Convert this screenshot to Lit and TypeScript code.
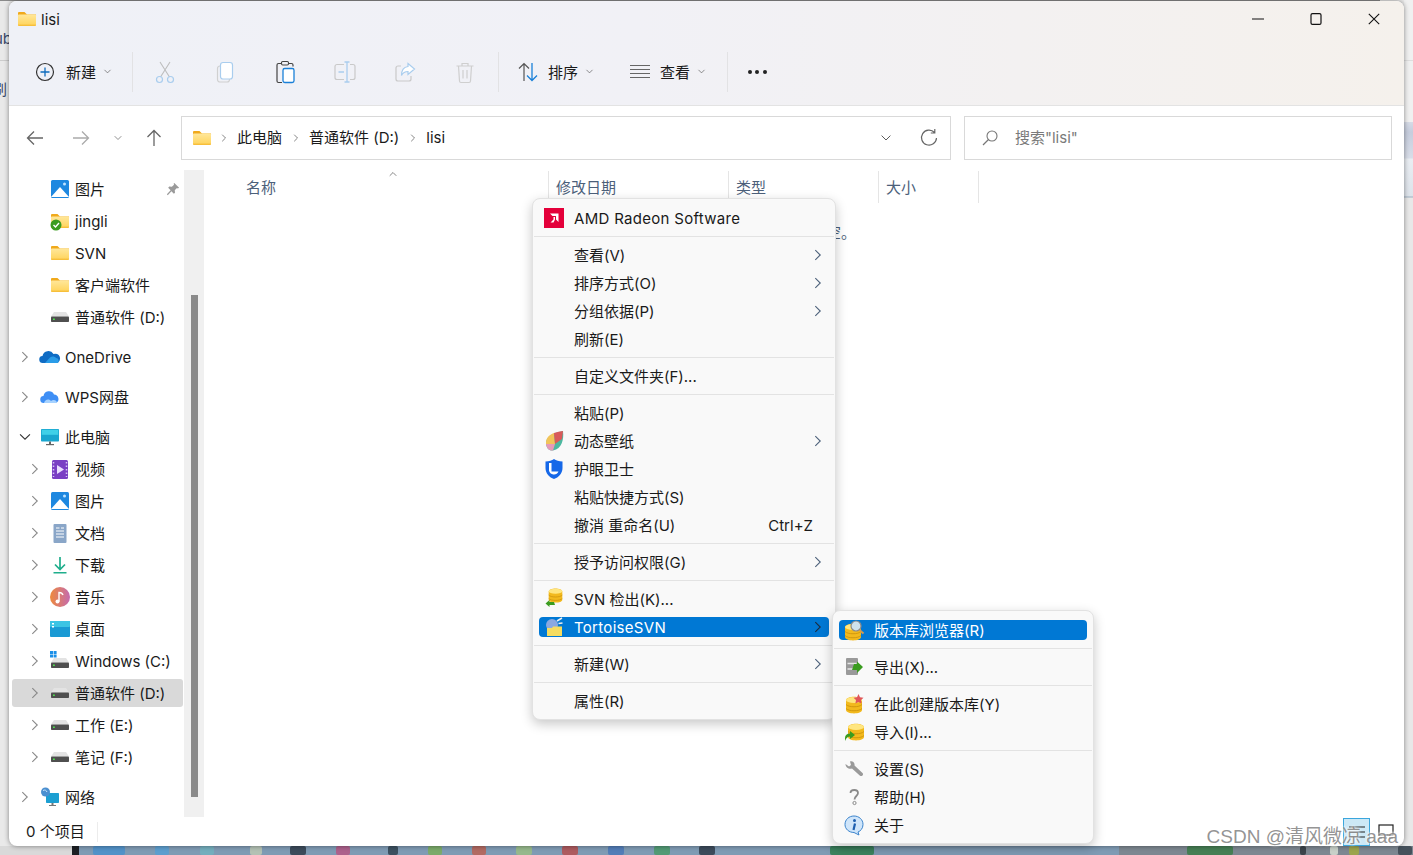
import { LitElement, html, css, svg, nothing } from "lit";
import { customElement } from "lit/decorators.js";
import { classMap } from "lit/directives/class-map.js";

const chevronRight = svg`<path d="M7 4.500 12.500 10 7 15.500" fill="none" stroke="currentColor" stroke-width="1.200"/>`;
const chevronDown = svg`<path d="M4.500 7 10 12.500 15.500 7" fill="none" stroke="currentColor" stroke-width="1.200"/>`;
const chevronUp = svg`<path d="M4.500 13 10 7.500l5.500 5.500" fill="none" stroke="currentColor" stroke-width="1.300"/>`;

const db = svg`<path d="M2 5.500c0-5 16-5 16 0V15c0 4.500-16 4.500-16 0z" fill="#f2b91d"/><ellipse cx="10" cy="5" rx="8" ry="3" fill="#ffe680"/><path d="M2 9.500c2.500 3 13.500 3 16 0M2 13.500c2.500 3 13.500 3 16 0" fill="none" stroke="#c98f0a" stroke-width=".8"/>`;
const drive = svg`<path d="M4 5h12l3 4.500H1z" fill="#e3e3e3"/><rect x="1" y="9.500" width="18" height="5.500" rx=".8" fill="#4f4f4f"/><rect x="3" y="11.500" width="1.800" height="1.500" fill="#4ee44e"/>`;
const folder = svg`<path d="M1 4a1 1 0 0 1 1-1h5.500L10 5.500h9V8H1z" fill="#f0a91b"/><rect x="1" y="5.500" width="18" height="11.500" rx=".8" fill="url(#fold)"/>`;

const icons: Record<string, unknown> = {
	folder,
	drive,
	picture: svg`<rect x="1" y="1" width="18" height="18" rx="1.500" fill="#1e88e0"/><path d="M1 18 10 8l9 10z" fill="#fff"/><circle cx="14.500" cy="5" r="1.500" fill="#bfe3ff"/>`,
	jingli: svg`${folder}<circle cx="6" cy="14" r="5.500" fill="#3a9c1f"/><path d="m3.500 14 2 2 3.500-4" fill="none" stroke="#fff" stroke-width="1.400"/>`,
	onedrive: svg`<path d="M3 16a3.500 3.500 0 0 1-.5-7A6 6 0 0 1 13.500 7 4.500 4.500 0 0 1 17 16z" fill="#0f6cc4"/><path d="M5 16l5-5.500c2-1.500 4.500-1.500 6 .5 2.500 0 3.500 3 2 5z" fill="#2a9ce8"/>`,
	wps: svg`<path d="M4 16a3.500 3.500 0 0 1-.5-7A5.500 5.500 0 0 1 14 7.500 4.500 4.500 0 0 1 16 16z" fill="#3f8ff5"/><path d="M4 16c1-3 4-5 7-2 2-2 6-1 6 2z" fill="#a6d2ff"/>`,
	pc: svg`<rect x="1" y="2" width="18" height="12.500" rx=".8" fill="#19a6cf"/><rect x="1.800" y="2.800" width="16.400" height="5" fill="#3fd0e8"/><rect x="9" y="14.500" width="2" height="2.500" fill="#666"/><rect x="6" y="17" width="8" height="1.200" fill="#666"/>`,
	video: svg`<rect x="2" y="1" width="16" height="19" rx="1.500" fill="#7a3fc4"/><path d="M7 6l7 4.500-7 4.500z" fill="#e9dcff"/><path d="M3.500 3v15M16.500 3v15" stroke="#d7c2f5" stroke-width="1.500" stroke-dasharray="1.500 2"/>`,
	doc: svg`<rect x="3.500" y="1" width="13" height="19" rx="1" fill="#8aa6c8"/><path d="M6 5h3.500M11 5h3M6 8h8M6 11h8M6 14h8" stroke="#fff" stroke-width="1"/>`,
	download: svg`<path d="M10 2v12M5 9.500l5 5 5-5" fill="none" stroke="#1fae8c" stroke-width="1.700"/><rect x="3.500" y="17" width="13" height="1.500" fill="#1fae8c"/>`,
	music: svg`<defs><linearGradient id="mus" x1="0" x2="1"><stop offset="0" stop-color="#ee8a3c"/><stop offset="1" stop-color="#c46ab0"/></linearGradient></defs><circle cx="10" cy="10" r="10" fill="url(#mus)"/><path d="M9 14.500V5.500c2 0 3.500 1 4 2.500" fill="none" stroke="#fff" stroke-width="1.400"/><circle cx="7.500" cy="14.500" r="2" fill="#fff"/>`,
	desktop: svg`<rect y="2" width="20" height="16" rx="1" fill="#1a9ad4"/><rect y="2" width="20" height="6" rx="1" fill="#3cc4e4"/><rect x="2" y="4" width="2" height="1.500" fill="#fff"/><rect x="2" y="7" width="2" height="1.500" fill="#fff"/>`,
	windows: svg`<g transform="translate(0 2)">${drive}</g><path d="M0 0h3v3H0zM3.600 0h3v3h-3zM0 3.600h3v3H0zM3.600 3.600h3v3h-3z" fill="#1a8fe8"/>`,
	network: svg`<rect x="6" y="6" width="13" height="10" rx=".8" fill="#1c9fd2"/><rect x="11.500" y="16" width="2" height="2" fill="#777"/><rect x="9" y="18" width="7" height="1" fill="#777"/><circle cx="5.500" cy="5" r="4.500" fill="#4a8fd0"/><path d="M3 3.500c2-1 3-.5 4 1.500" stroke="#cfe6fa" fill="none"/>`,
	amd: svg`<rect x="0" y="0" width="20" height="20" fill="#e4003a"/><path d="M6 5.500h8.500V14l-2.500-2.500V8H8.500zM9.500 9H11v2.500l-1.500 3H6.500l3-3z" fill="#fff"/>`,
	leaf: svg`<path d="M2 13C1.500 7 7 2 19 0c1 8-1 18-10 19.500C5 20 2.500 17 2 13z" fill="#4cb8a0"/><path d="M2 13C1.500 7 5 4 10 2l1 11z" fill="#f2c45a"/><path d="M10 2c3-1 6-1.500 9-2l-1 8-7 5z" fill="#d95a5a"/><path d="M2 13l9 0-2 6.500C5 20 2.500 17 2 13z" fill="#e69ab8"/>`,
	shield: svg`<path d="M10 0c2 1.500 5 2.500 8.500 2.500V9c0 5.500-4 9.500-8.500 11C5.500 18.500 1.500 14.500 1.500 9V2.500C5 2.500 8 1.500 10 0z" fill="#1668e8"/><path d="M7.500 4v8.500h7a5 5 0 0 1-9.500-1V4z" fill="#fff"/>`,
	checkout: svg`<g transform="translate(3 -2) scale(.85)">${db}</g><path d="M10 13H5.500V11L1.500 14.500l4 3.500v-2H11z" fill="#3a9c1f"/>`,
	tortoise: svg`<circle cx="8" cy="8" r="6" fill="#8aa8e0"/><path d="M13 4l5-3M14.500 6.500l4-.5" stroke="#eee" stroke-width="1.500"/><path d="M3 11h5l1-1.500h9V19H3z" fill="#f5dc60"/>`,
	repo: svg`<g transform="translate(-1 2)">${db}</g><circle cx="12" cy="6" r="5" fill="#cfe2ee" stroke="#8a8a8a" stroke-width="1.200"/><path d="M15.500 10l4 3.500" stroke="#d09a50" stroke-width="2"/>`,
	export: svg`<rect x="2" y="1" width="12" height="17" rx="1" fill="#9a9a9a"/><path d="M3.500 6.500h9M3.500 12h9" stroke="#e6e6e6" stroke-width="1.500"/><path d="M10 7h3V4.500l6 5.500-6 6v-3H8z" fill="#3a9c1f"/>`,
	create: svg`<g transform="translate(0 1)">${db}</g><path d="m14.500 0 1.500 3.200 3.500.5-2.500 2.400.6 3.400-3.100-1.600-3.100 1.600.6-3.400-2.500-2.400 3.500-.5z" fill="#e0565a"/>`,
	import: svg`<g transform="translate(2 0)">${db}</g><path d="M1 19v-3c0-3 2-4.500 5-4.500V9l5 4-5 4v-2.500c-2 0-3.500 1-5 4.500z" fill="#3a9c1f"/>`,
	wrench: svg`<path d="M1.500 5 5 7.500 7 6 6 2.500C8.500 1.500 11 3.500 10.500 6.500L18.500 14c1.500 1.500-.5 4-2.500 2.800L8 9.500C5 10.500 1.500 8.500 1.500 5z" fill="#9a9a9a"/>`,
	help: svg`<path d="M6.500 6c0-4 7.500-4 7.500 0 0 3-3.500 3-3.500 6.500" fill="none" stroke="#8a8a8a" stroke-width="1.800"/><circle cx="10.500" cy="16" r="1.600" fill="none" stroke="#8a8a8a"/>`,
	info: svg`<path d="M10 1c5 0 9 3.500 9 8.500 0 4-2.500 6.500-5 7.500l1 3-5-2.500c-5 0-9-3.500-9-8C1 4.500 5 1 10 1z" fill="#cfe5fa" stroke="#3a83cc"/><circle cx="10.500" cy="5.500" r="1.500" fill="#1d5fb0"/><path d="M11 8.500l-1.500 6.500" stroke="#1d5fb0" stroke-width="2.200"/>`,
};

const icon = (name: string) => html`<svg class="icon" viewBox="0 0 20 20" overflow="visible">${icons[name]}</svg>`;
const chev = (cls: string, shape: unknown = chevronRight) => html`<svg class="${cls}" viewBox="0 0 20 20">${shape}</svg>`;

const tools = {
	plus: svg`<circle cx="12" cy="12" r="8.500" fill="none" stroke="#333" stroke-width="1.200"/><path d="M12 7.500v9M7.500 12h9" stroke="#0f6cbd" stroke-width="1.300"/>`,
	cut: svg`<path d="M7 2l9.500 15M17 2 7.500 17" fill="none" stroke="#bdbdbd" stroke-width="1.100"/><circle cx="6.500" cy="19.500" r="3" fill="none" stroke="#a9cdee" stroke-width="1.200"/><circle cx="17.500" cy="19.500" r="3" fill="none" stroke="#a9cdee" stroke-width="1.200"/>`,
	copy: svg`<rect x="4.500" y="6" width="12" height="16" rx="2.500" fill="none" stroke="#d0d0d0" stroke-width="1.200"/><rect x="7.500" y="2.500" width="12" height="16.500" rx="2.500" fill="#fff" stroke="#a9cdee" stroke-width="1.200"/>`,
	paste: svg`<path d="M9 3.500H5.500A1.500 1.500 0 0 0 4 5v16a1.500 1.500 0 0 0 1.500 1.500H9M15 3.500h3.500A1.500 1.500 0 0 1 20 5v1.500" fill="none" stroke="#444" stroke-width="1.200"/><rect x="8.500" y="1.500" width="7" height="3.500" rx="1.200" fill="none" stroke="#444" stroke-width="1.100"/><rect x="10" y="8.500" width="11" height="14" rx="1.800" fill="#fff" stroke="#1a80d8" stroke-width="1.300"/>`,
	rename: svg`<path d="M11 4.500H4a2 2 0 0 0-2 2v11a2 2 0 0 0 2 2h7M17 4.500h3a2 2 0 0 1 2 2v11a2 2 0 0 1-2 2h-3" fill="none" stroke="#c9c9c9" stroke-width="1.200"/><path d="M14 2v20M11.500 2h5M11.500 22h5M5.500 12H11" stroke="#a9cdee" stroke-width="1.300" fill="none"/>`,
	share: svg`<path d="M8 6H5a2 2 0 0 0-2 2v11a2 2 0 0 0 2 2h11a2 2 0 0 0 2-2v-3" fill="none" stroke="#c9c9c9" stroke-width="1.200"/><path d="M15 3.500 21.500 9 15 14.500V11.500c-3 0-5 1-6.500 4 0-5 2.500-8.500 6.500-9z" fill="#fff" stroke="#a9cdee" stroke-width="1.200"/>`,
	trash: svg`<path d="M3.500 6h17M9 6V3.500h6V6M5.500 6l1 15a1.500 1.500 0 0 0 1.500 1.500h8a1.500 1.500 0 0 0 1.500-1.500l1-15M10 10v8.500M14 10v8.500" fill="none" stroke="#cfcfcf" stroke-width="1.200"/>`,
	sort: svg`<path d="M8 21V3.500M3 8.500l5-5 5 5" fill="none" stroke="#555" stroke-width="1.200"/><path d="M16 3v17.500M11 15.500l5 5 5-5" fill="none" stroke="#1a80d8" stroke-width="1.300"/>`,
	view: svg`<path d="M2 5.500h20M2 9.500h20M2 13.500h20M2 17.500h20" stroke="#666" stroke-width="1.200"/>`,
};
const tool = (name: keyof typeof tools) => html`<svg class="tool" viewBox="0 0 24 24">${tools[name]}</svg>`;

interface NavRow {
	label: string;
	icon: string;
	level: 0 | 1;
	arrow?: "right" | "down";
	group?: boolean;
	pin?: boolean;
	active?: boolean;
}

const navRows: NavRow[] = [
	{ label: "图片", icon: "picture", level: 1, pin: true },
	{ label: "jingli", icon: "jingli", level: 1 },
	{ label: "SVN", icon: "folder", level: 1 },
	{ label: "客户端软件", icon: "folder", level: 1 },
	{ label: "普通软件 (D:)", icon: "drive", level: 1 },
	{ label: "OneDrive", icon: "onedrive", level: 0, arrow: "right", group: true },
	{ label: "WPS网盘", icon: "wps", level: 0, arrow: "right", group: true },
	{ label: "此电脑", icon: "pc", level: 0, arrow: "down", group: true },
	{ label: "视频", icon: "video", level: 1, arrow: "right" },
	{ label: "图片", icon: "picture", level: 1, arrow: "right" },
	{ label: "文档", icon: "doc", level: 1, arrow: "right" },
	{ label: "下载", icon: "download", level: 1, arrow: "right" },
	{ label: "音乐", icon: "music", level: 1, arrow: "right" },
	{ label: "桌面", icon: "desktop", level: 1, arrow: "right" },
	{ label: "Windows (C:)", icon: "windows", level: 1, arrow: "right" },
	{ label: "普通软件 (D:)", icon: "drive", level: 1, arrow: "right", active: true },
	{ label: "工作 (E:)", icon: "drive", level: 1, arrow: "right" },
	{ label: "笔记 (F:)", icon: "drive", level: 1, arrow: "right" },
	{ label: "网络", icon: "network", level: 0, arrow: "right", group: true },
];

interface MenuItem {
	label: string;
	icon?: string;
	sub?: boolean;
	key?: string;
	active?: boolean;
	wide?: boolean;
}

const contextMenu: MenuItem[][] = [
	[{ label: "AMD Radeon Software", icon: "amd", wide: true }],
	[
		{ label: "查看(V)", sub: true },
		{ label: "排序方式(O)", sub: true },
		{ label: "分组依据(P)", sub: true },
		{ label: "刷新(E)" },
	],
	[{ label: "自定义文件夹(F)..." }],
	[
		{ label: "粘贴(P)" },
		{ label: "动态壁纸", icon: "leaf", sub: true },
		{ label: "护眼卫士", icon: "shield" },
		{ label: "粘贴快捷方式(S)" },
		{ label: "撤消 重命名(U)", key: "Ctrl+Z" },
	],
	[{ label: "授予访问权限(G)", sub: true }],
	[
		{ label: "SVN 检出(K)...", icon: "checkout" },
		{ label: "TortoiseSVN", icon: "tortoise", sub: true, active: true, wide: true },
	],
	[{ label: "新建(W)", sub: true }],
	[{ label: "属性(R)" }],
];

const svnMenu: MenuItem[][] = [
	[{ label: "版本库浏览器(R)", icon: "repo", active: true }],
	[{ label: "导出(X)...", icon: "export" }],
	[
		{ label: "在此创建版本库(Y)", icon: "create" },
		{ label: "导入(I)...", icon: "import" },
	],
	[
		{ label: "设置(S)", icon: "wrench" },
		{ label: "帮助(H)", icon: "help" },
		{ label: "关于", icon: "info" },
	],
];

// what shows of the taskbar under the window: [x, width, colour]
const taskbarBase: [number, number, string][] = [
	[0, 72, "#d9d9d9"],
	[72, 7, "#1c1f24"],
	[79, 1040, "#7f9bb4"],
	[1119, 294, "#7d8791"],
];
const taskbarIcons: [number, number, string][] = [
	[93, 32, "#3f8fd0"],
	[155, 14, "#4f9fd8"],
	[200, 14, "#6fb7c0"],
	[250, 12, "#c9d2b4"],
	[290, 16, "#1f2a35"],
	[336, 14, "#c0487a"],
	[388, 10, "#20303c"],
	[428, 14, "#79b04a"],
	[472, 14, "#c8563f"],
	[516, 16, "#9fc47a"],
	[562, 16, "#c0403a"],
	[608, 16, "#3f70b8"],
	[654, 16, "#3f9a5a"],
	[699, 16, "#1f2a35"],
	[830, 44, "#1f7a3a"],
	[1187, 46, "#2f7a3a"],
	[1300, 6, "#20262c"],
	[1330, 8, "#e8efe0"],
	[1349, 10, "#a8b030"],
	[1398, 14, "#2f3a44"],
];

@customElement("app-root")
export class AppRoot extends LitElement {
	static override styles = css`
		:host {
			background: #e9e9e9;
			color: #1a1a1a;
			display: block;
			font-family: Inter, "Noto Sans CJK SC", sans-serif;
			font-size: 15px;
			height: 855px;
			line-height: 20px;
			overflow: hidden;
			position: relative;
			width: 1413px;
		}

		svg { display: block; flex: none; }
		.icon { height: 20px; width: 20px; }
		.tool { height: 24px; width: 24px; }

		.gradients { height: 0; position: absolute; width: 0; }

		.behind-top { background: #8a8a8a; height: 1px; left: 0; position: absolute; top: 0; width: 1380px; }

		.behind-left {
			color: #3a4a6a;
			height: 105px;
			left: 0;
			overflow: hidden;
			position: absolute;
			top: 0;
			width: 9px;
		}
		.behind-left .ub { margin-left: -6px; margin-top: 29px; }
		.behind-left .rule { background: #ccc; height: 1px; margin-top: 11px; }
		.behind-left .ke { margin-left: -8px; margin-top: 19px; }

		.behind-right {
			background: linear-gradient(#f0f0f0 60px, #ccc 60px, #f0f0f0 61px, #f0f0f0 122px, #d6dbe6 122px, #c6cddd 132px, #d8dde8 158px, #e9edf2 159px, #dde3ea 196px, #9fb0c0 197px, #e8e8e8 198px);
			height: 846px;
			position: absolute;
			right: 0;
			top: 0;
			width: 9px;
		}

		.taskbar { bottom: 0; left: 0; position: absolute; }

		.window {
			background: #fff;
			border-radius: 8px;
			box-shadow: 0 0 5px rgba(0, 0, 0, .45);
			display: flex;
			flex-direction: column;
			height: 845px;
			left: 9px;
			overflow: hidden;
			position: absolute;
			top: 1px;
			width: 1395px;
		}

		.head {
			background: linear-gradient(90deg, #eff1f7, #f1f1f6 45%, #f5f1ec);
			border-bottom: 1px solid #e3e3e3;
		}

		.titlebar { align-items: center; display: flex; height: 39px; padding-left: 8px; }
		.titlebar .name { margin-left: 4px; margin-top: -1px; }
		.titlebar .icon { margin-top: -3px; }
		.controls { display: flex; margin-left: auto; margin-right: 1px; }
		.controls svg { height: 12px; margin: 0 23px 4px; width: 12px; }

		.toolbar { align-items: center; box-sizing: border-box; display: flex; height: 65px; padding-bottom: 2px; padding-left: 24px; }
		.toolbar .text { margin-left: 8px; padding-top: 2px; white-space: nowrap; width: 36px; }
		.toolbar .small { color: #555; height: 11px; width: 11px; }
		.tool-btn { display: flex; justify-content: center; width: 60px; }
		.text-btn { align-items: center; display: flex; }
		.divider { background: #e2e2e4; height: 40px; margin: 0 2px 0 3px; width: 1px; }
		.new-btn { margin-right: 16px; }
		.new-btn .text { margin-left: 9px; }
		.sort-btn { margin-left: 15px; margin-right: 33px; }
		.view-btn { margin-right: 17px; }
		.dots { display: flex; gap: 3.500px; margin-left: 17.500px; }
		.dots i { background: #222; border-radius: 50%; height: 4px; width: 4px; }

		.address { align-items: center; display: flex; height: 64px; }
		.nav-btn { align-items: center; color: #666; display: flex; justify-content: center; width: 46px; }
		.nav-btn.off { color: #aaa; }
		.nav-btn.narrow { width: 28px; }
		.nav-btn svg { height: 20px; width: 20px; }
		.nav-btn .small { height: 12px; width: 12px; }
		.nav-group { display: flex; margin-left: 3px; margin-right: 5px; }
		.nav-group .up { width: 44px; }

		.box {
			align-items: center;
			background: #fff;
			border: 1px solid #d9d9d9;
			box-sizing: border-box;
			display: flex;
			height: 44px;
		}
		.path { padding-left: 10px; width: 770px; }
		.path .crumb-sep { color: #555; height: 12px; margin: 0 7px 0 8px; width: 12px; }
		.path .icon + .crumb-sep { margin-left: 6px; }
		.path .tail { color: #555; height: 16px; margin-left: auto; margin-right: 25px; width: 16px; }
		.path .refresh { height: 20px; margin-right: 11px; width: 20px; }
		.search { color: #7a7a7a; margin-left: 13px; padding-left: 16px; width: 428px; }
		.search svg { height: 18px; margin-right: 16px; width: 18px; }

		.main { display: flex; flex: 1; min-height: 0; }

		.side { box-sizing: border-box; display: flex; flex-direction: column; padding-top: 3px; width: 175px; }
		.row {
			align-items: center;
			border-radius: 3px;
			display: flex;
			flex: none;
			height: 28px;
			margin: 2px 1px 2px 3px;
			padding-left: 4px;
		}
		.row.group { margin-top: 10px; }
		.row.l1 { padding-left: 14px; }
		.row.active { background: #d9d9d9; }
		.row .arrow { color: #888; height: 18px; margin-right: 6px; width: 18px; }
		.row .arrow.down { color: #333; }
		.row .gap { flex: none; height: 18px; margin-right: 6px; width: 18px; }
		.row .icon { margin-right: 5px; }
		.row .label { padding-top: 2px; white-space: nowrap; }
		.row .pin { height: 14px; margin-left: auto; margin-right: 3px; width: 14px; }

		.track { background: #f0f0f0; box-sizing: border-box; padding-top: 125px; width: 20px; }
		.thumb { background: #8a8a8a; height: 502px; margin-left: 7px; width: 7px; }

		.pane { color: #4c607a; flex: 1; }
		.columns { display: flex; height: 32px; margin-top: 1px; }
		.col { align-items: center; border-right: 1px solid #e5e5e5; box-sizing: border-box; display: flex; padding-left: 7px; padding-top: 2px; }
		.col.name { padding-left: 42px; position: relative; width: 345px; }
		.col.date { width: 180px; }
		.col.type { width: 150px; }
		.col.size { width: 100px; }
		.sort-mark { color: #666; height: 12px; left: 183px; position: absolute; top: -3px; width: 12px; }
		.empty { margin-left: 547px; margin-top: 20px; }

		.status { align-items: center; display: flex; height: 29px; padding-left: 17px; }
		.status .count { border-right: 1px solid #ececec; padding-right: 12px; }
		.views { display: flex; margin-left: auto; margin-right: 10px; }
		.view-cur { align-items: center; background: #cce8f6; border: 1px solid #3aa6dd; box-sizing: border-box; display: flex; height: 28px; justify-content: center; margin-right: 8px; width: 27px; }
		.view-alt { align-items: center; display: flex; height: 28px; justify-content: center; width: 16px; }
		.views svg { height: 16px; width: 16px; }

		.menu {
			background: #f9f9f9;
			border: 1px solid #e2e2e2;
			border-radius: 8px;
			box-shadow: 0 4px 12px rgba(0, 0, 0, .22);
			box-sizing: border-box;
			color: #1a1a1a;
			padding: 5px 0 4px;
			position: absolute;
		}
		.menu.main-menu { left: 532px; top: 198px; width: 304px; }
		.menu.sub-menu { left: 832px; top: 610px; width: 262px; }
		.menu hr { background: #e3e3e3; border: 0; height: 1px; margin: 4px 1px; }
		.item { padding: 4px 6px; }
		.inner { align-items: center; border-radius: 4px; display: flex; height: 20px; padding-left: 35px; position: relative; white-space: nowrap; }
		.inner.on { background: #0078d4; color: #fff; }
		.inner span { padding-top: 2px; }
		.inner .wide { letter-spacing: .3px; }
		.inner .icon { left: 5px; position: absolute; top: 0; }
		.inner .more { color: #4c607a; height: 18px; margin-left: auto; margin-right: 2px; width: 18px; }
		.inner .more.on-bar { color: #1d2b3d; }
		.inner .key { margin-left: auto; margin-right: 16px; }

		.watermark {
			bottom: 7px;
			color: rgba(120, 120, 120, .8);
			font-family: "Liberation Sans", "Noto Sans CJK SC", sans-serif;
			font-size: 19px;
			line-height: 22px;
			position: absolute;
			right: 15px;
			text-shadow: 0 0 3px #fff, 0 0 3px #fff;
			white-space: nowrap;
		}
	`;

	private renderRow(row: NavRow) {
		const classes = { row: true, l1: row.level === 1, group: !!row.group, active: !!row.active };
		return html`
			<div class="${classMap(classes)}">
				${row.arrow === "down"
					? chev("arrow down", chevronDown)
					: row.arrow
						? chev("arrow")
						: html`<span class="gap"></span>`}
				${icon(row.icon)}
				<span class="label">${row.label}</span>
				${row.pin
					? html`<svg class="pin" viewBox="0 0 16 16"><path d="M9.500 1 15 6.500l-1.500.8-1-.5-2.500 2.500.3 3-1.300 1.200-2.800-2.800L2 15l-1-1 4.300-4.700L2.500 6.500 3.700 5.200l3 .3L9.200 3l-.5-1z" fill="#9a9a9a"/></svg>`
					: nothing}
			</div>
		`;
	}

	private renderMenu(groups: MenuItem[][], cls: string) {
		return html`
			<div class="menu ${cls}">
				${groups.map(
					(items, i) => html`
						${i > 0 ? html`<hr />` : nothing}
						${items.map(
							(item) => html`
								<div class="item">
									<div class="inner ${item.active ? "on" : ""}">
										${item.icon ? icon(item.icon) : nothing}
										<span class="${item.wide ? "wide" : ""}">${item.label}</span>
										${item.key ? html`<span class="key">${item.key}</span>` : nothing}
										${item.sub ? chev(item.active ? "more on-bar" : "more") : nothing}
									</div>
								</div>
							`
						)}
					`
				)}
			</div>
		`;
	}

	private renderTitlebar() {
		return html`
			<div class="titlebar">
				${icon("folder")}
				<span class="name">lisi</span>
				<div class="controls">
					<svg viewBox="0 0 12 12"><path d="M0 6h12" stroke="#111" stroke-width="1.200"/></svg>
					<svg viewBox="0 0 12 12"><rect x="1" y=".6" width="10" height="10.800" rx="1.500" fill="none" stroke="#111" stroke-width="1.200"/></svg>
					<svg viewBox="0 0 12 12"><path d="m.8.8 10.400 10.400M11.200.8.8 11.200" stroke="#111" stroke-width="1.100"/></svg>
				</div>
			</div>
		`;
	}

	private renderToolbar() {
		return html`
			<div class="toolbar">
				<div class="text-btn new-btn">${tool("plus")}<span class="text">新建</span>${chev("small", chevronDown)}</div>
				<div class="divider"></div>
				${(["cut", "copy", "paste", "rename", "share", "trash"] as const).map(
					(name) => html`<div class="tool-btn">${tool(name)}</div>`
				)}
				<div class="divider"></div>
				<div class="text-btn sort-btn">${tool("sort")}<span class="text">排序</span>${chev("small", chevronDown)}</div>
				<div class="text-btn view-btn">${tool("view")}<span class="text">查看</span>${chev("small", chevronDown)}</div>
				<div class="divider"></div>
				<div class="dots"><i></i><i></i><i></i></div>
			</div>
		`;
	}

	private renderAddress() {
		return html`
			<div class="address">
				<div class="nav-group">
					<div class="nav-btn"><svg viewBox="0 0 20 20"><path d="M18 10H2.500M9 3.500 2.500 10 9 16.500" fill="none" stroke="currentColor" stroke-width="1.300"/></svg></div>
					<div class="nav-btn off"><svg viewBox="0 0 20 20"><path d="M2 10h15.500M11 3.500l6.500 6.500-6.500 6.500" fill="none" stroke="currentColor" stroke-width="1.300"/></svg></div>
					<div class="nav-btn narrow">${chev("small", chevronDown)}</div>
					<div class="nav-btn up"><svg viewBox="0 0 20 20"><path d="M10 18V2.500M3.500 9 10 2.500 16.500 9" fill="none" stroke="currentColor" stroke-width="1.300"/></svg></div>
				</div>
				<div class="box path">
					${icon("folder")}
					${chev("crumb-sep")}<span>此电脑</span>
					${chev("crumb-sep")}<span>普通软件 (D:)</span>
					${chev("crumb-sep")}<span>lisi</span>
					${chev("tail", chevronDown)}
					<svg class="refresh" viewBox="0 0 20 20"><path d="M15.500 4.500A7.500 7.500 0 1 0 17.500 10M15.800 1v4h-4" fill="none" stroke="#666" stroke-width="1.200"/></svg>
				</div>
				<div class="box search">
					<svg viewBox="0 0 18 18"><circle cx="11" cy="7" r="5" fill="none" stroke="#777" stroke-width="1.100"/><path d="M7.500 10.500 2 16" stroke="#777" stroke-width="1.200"/></svg>
					<span>搜索"lisi"</span>
				</div>
			</div>
		`;
	}

	override render() {
		return html`
			<svg class="gradients">
				<defs>
					<linearGradient id="fold" x1="0" y1="0" x2="0" y2="1">
						<stop offset="0" stop-color="#ffe79a" />
						<stop offset=".8" stop-color="#ffd766" />
						<stop offset="1" stop-color="#f5b82e" />
					</linearGradient>
				</defs>
			</svg>
			<div class="behind-top"></div>
			<div class="behind-left">
				<div class="ub">ub</div>
				<div class="rule"></div>
				<div class="ke">刷</div>
			</div>
			<div class="behind-right"></div>
			<svg class="taskbar" width="1413" height="9" viewBox="0 0 1413 9">
				${taskbarBase.map(([x, w, fill]) => svg`<rect x="${x}" width="${w}" height="9" fill="${fill}"/>`)}
				${taskbarIcons.map(([x, w, fill]) => svg`<rect x="${x}" width="${w}" height="9" rx="2" fill="${fill}" opacity=".7"/>`)}
			</svg>

			<div class="window">
				<div class="head">${this.renderTitlebar()} ${this.renderToolbar()}</div>
				${this.renderAddress()}
				<div class="main">
					<div class="side">${navRows.map((row) => this.renderRow(row))}</div>
					<div class="track"><div class="thumb"></div></div>
					<div class="pane">
						<div class="columns">
							<div class="col name">名称${chev("sort-mark", chevronUp)}</div>
							<div class="col date">修改日期</div>
							<div class="col type">类型</div>
							<div class="col size">大小</div>
						</div>
						<div class="empty">此文件夹为空。</div>
					</div>
				</div>
				<div class="status">
					<span class="count">0 个项目</span>
					<div class="views">
						<div class="view-cur"><svg viewBox="0 0 16 16"><path d="M0 3h16M0 8h16M0 13h16" stroke="#222" stroke-width="1.200"/></svg></div>
						<div class="view-alt"><svg viewBox="0 0 16 16"><rect x="1" y="1" width="14" height="10" fill="none" stroke="#222" stroke-width="1.200"/><path d="M1 14h3M6 14h3M11 14h4" stroke="#222"/></svg></div>
					</div>
				</div>
			</div>

			${this.renderMenu(contextMenu, "main-menu")}
			${this.renderMenu(svnMenu, "sub-menu")}
			<div class="watermark">CSDN @清风微凉 aaa</div>
		`;
	}
}
